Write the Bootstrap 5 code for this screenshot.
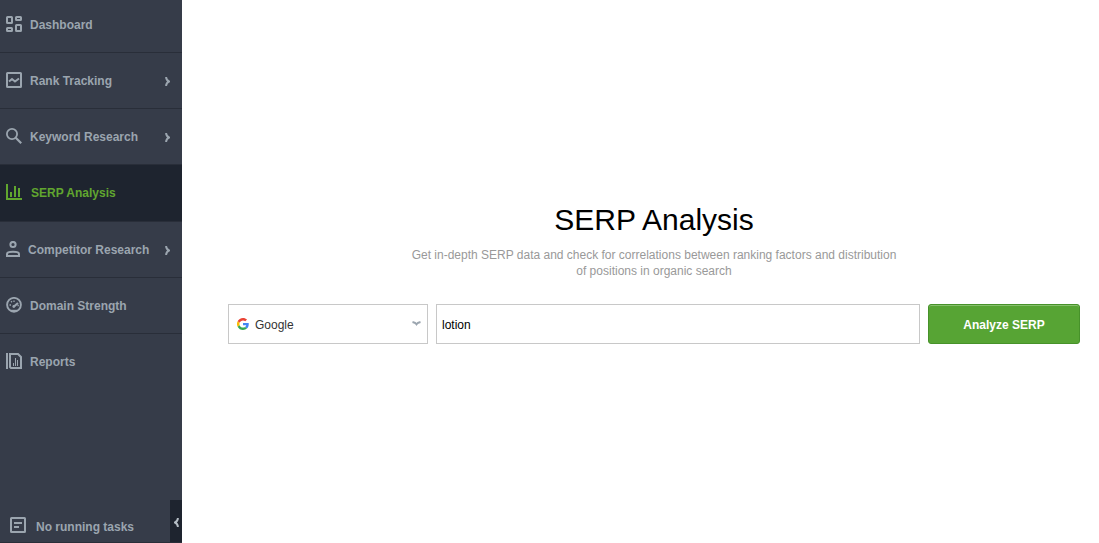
<!DOCTYPE html>
<html lang="en">
<head>
<meta charset="utf-8">
<meta name="viewport" content="width=device-width, initial-scale=1">
<title>SERP Analysis</title>
<link href="https://cdn.jsdelivr.net/npm/bootstrap@5.3.0/dist/css/bootstrap.min.css" rel="stylesheet">
<style>
  body { font-family: "Liberation Sans", Arial, sans-serif; font-size: 12px; line-height: 16px; color: #000; background: #fff; }
  .sidebar { width: 182px; background: #363c49; color: #9ba5af; font-weight: 700; }
  .side-link { height: 56px; padding: 0 12px 0 6px; gap: 8px; border-bottom: 1px solid #292e39; color: #9ba5af; text-decoration: none; }
  .side-link.first-link { height: 53px; padding-bottom: 3px; }
  .side-link.current { height: 57px; padding-bottom: 1px; background: #1e242f; color: #61a62f; gap: 9px; }
  .side-link.people { gap: 6px; }
  .side-link.last-link { border-bottom-color: transparent; }
  .chevron { width: 5px; height: 9px; margin-top: 2px; fill: none; stroke: currentColor; stroke-width: 2; }
  .glyph { width: 16px; height: 16px; margin-bottom: 1px; fill: none; stroke: currentColor; stroke-width: 2; }
  .tasks { height: 43px; border-bottom: 1px solid #292e39; }
  .tasks-label { padding: 11px 0 0 10px; gap: 10px; }
  .tasks-label .glyph { margin-bottom: 3px; }
  .collapse-tab { width: 12px; background: #1e242f; color: #b5bdc5; }
  .collapse-tab .chevron { transform: scaleX(-1); }
  .content-area { padding: 0 19px 0 46px; }
  .page-title { font-size: 30px; line-height: 40px; font-weight: 400; margin-bottom: 7px; }
  .intro { max-width: 490px; margin-bottom: 25px; color: #999; }
  .search-row { gap: 8px; }
  .engine { width: 200px; }
  .engine .form-select { padding: 2px 24px 0 26px; background-image: none; color: #333; }
  .engine-logo { left: 9px; width: 12px; height: 12px; }
  .engine-arrow { right: 7px; width: 9px; height: 5px; }
  .field { height: 40px; border: 1px solid #c8c8c8; border-radius: 0; font-size: 12px; line-height: 16px; }
  .query { padding: 2px 5px 0; color: #000; }
  .query:focus { color: #000; }
  .btn-analyze { width: 152px; height: 40px; padding: 2px 0 0; border: 1px solid #47922a; border-radius: 3px; background: #57a434; color: #fff; font-size: 12px; font-weight: 700; box-shadow: inset 0 1px #86bf6c; }
  .btn-analyze:hover { background: #4e982d; color: #fff; border-color: #47922a; }
</style>
</head>
<body>
<div class="d-flex min-vh-100">
  <aside class="sidebar d-flex flex-column flex-shrink-0">
    <nav class="d-flex flex-column" aria-label="Main">
      <a href="#" class="side-link first-link d-flex align-items-center">
        <svg class="glyph" viewBox="0 0 16 16" aria-hidden="true"><rect x="1" y="1" width="5" height="6" rx=".5"/><rect x="10" y="1" width="5" height="3" rx=".5"/><rect x="1" y="12" width="5" height="3" rx=".5"/><rect x="10" y="9" width="5" height="6" rx=".5"/></svg>
        <span>Dashboard</span>
      </a>
      <a href="#" class="side-link d-flex align-items-center">
        <svg class="glyph" viewBox="0 0 16 16" aria-hidden="true"><rect x="1" y="1" width="14" height="14" rx=".5"/><path d="M3 9.500 6 7l3 2.500 4-3"/></svg>
        <span>Rank Tracking</span>
        <svg class="chevron ms-auto" viewBox="0 0 5 9" aria-hidden="true"><path d="M1 0Q1.500 3.500 4 4.500 1.500 5.500 1 9"/></svg>
      </a>
      <a href="#" class="side-link d-flex align-items-center">
        <svg class="glyph" viewBox="0 0 16 16" aria-hidden="true"><circle cx="6" cy="6" r="5.100" stroke-width="1.800"/><path d="m9.700 9.700 5.500 5.500" stroke-width="2.200"/></svg>
        <span>Keyword Research</span>
        <svg class="chevron ms-auto" viewBox="0 0 5 9" aria-hidden="true"><path d="M1 0Q1.500 3.500 4 4.500 1.500 5.500 1 9"/></svg>
      </a>
      <a href="#" class="side-link current d-flex align-items-center" aria-current="page">
        <svg class="glyph" viewBox="0 0 16 16" aria-hidden="true"><path d="M1 0v15h15M5 8v5M9 2v11M13 4v9"/></svg>
        <span>SERP Analysis</span>
      </a>
      <a href="#" class="side-link people d-flex align-items-center">
        <svg class="glyph" viewBox="0 0 16 16" aria-hidden="true"><circle cx="7" cy="3.500" r="2.600"/><path d="M1 15v-2c0-3 12-3 12 0v2z"/></svg>
        <span>Competitor Research</span>
        <svg class="chevron ms-auto" viewBox="0 0 5 9" aria-hidden="true"><path d="M1 0Q1.500 3.500 4 4.500 1.500 5.500 1 9"/></svg>
      </a>
      <a href="#" class="side-link d-flex align-items-center">
        <svg class="glyph" viewBox="0 0 16 16" aria-hidden="true"><circle cx="8" cy="7.800" r="6.900" stroke-width="1.900"/><path d="m8 9.500 4-3.500" stroke-width="2.200"/><path d="M3.500 8H5M5 4.300l1 1M8 3.500V5M11.500 8.500h1.300" stroke-width="1.300"/><circle cx="7.800" cy="9.500" r="1.400" fill="currentColor" stroke="none"/><path d="M5 13.800h6"/></svg>
        <span>Domain Strength</span>
      </a>
      <a href="#" class="side-link last-link d-flex align-items-center">
        <svg class="glyph" viewBox="0 0 16 16" aria-hidden="true"><path d="M1 0v16"/><path d="M4 1h8l3 3v11H5l-1-1z"/><path d="M7.500 10v3M9.500 5v8M11.500 7v6" stroke-width="1"/></svg>
        <span>Reports</span>
      </a>
    </nav>
    <div class="tasks mt-auto d-flex justify-content-between">
      <div class="tasks-label d-flex align-items-center">
        <svg class="glyph" viewBox="0 0 16 16" aria-hidden="true"><rect x="1" y="1" width="14" height="14" rx=".5"/><path d="M4 6h8M4 10h5"/></svg>
        <span>No running tasks</span>
      </div>
      <button type="button" class="collapse-tab border-0 p-0 d-flex align-items-center justify-content-center" aria-label="Collapse sidebar">
        <svg class="chevron" viewBox="0 0 5 9" aria-hidden="true"><path d="M1 0Q1.500 3.500 4 4.500 1.500 5.500 1 9"/></svg>
      </button>
    </div>
  </aside>

  <main class="content-area flex-grow-1 d-flex flex-column justify-content-center">
    <h1 class="page-title text-center">SERP Analysis</h1>
    <p class="intro text-center mx-auto">Get in-depth SERP data and check for correlations between ranking factors and distribution of positions in organic search</p>
    <form class="search-row d-flex">
      <div class="engine position-relative d-flex align-items-center flex-shrink-0">
        <select class="form-select field" aria-label="Search engine"><option selected>Google</option></select>
        <svg class="engine-logo position-absolute pe-none" viewBox="0 0 48 48" aria-hidden="true">
          <path fill="#EA4335" d="M24 9.500c3.540 0 6.710 1.220 9.210 3.600l6.850-6.850C35.900 2.380 30.470 0 24 0 14.620 0 6.510 5.380 2.560 13.220l7.980 6.190C12.430 13.720 17.740 9.500 24 9.500z"/>
          <path fill="#4285F4" d="M46.980 24.550c0-1.570-.15-3.090-.38-4.550H24v9.020h12.940c-.58 2.960-2.260 5.480-4.780 7.180l7.730 6c4.510-4.180 7.090-10.360 7.090-17.650z"/>
          <path fill="#FBBC05" d="M10.530 28.590A14.500 14.500 0 0 1 10.530 19.410l-7.980-6.190a24 24 0 0 0 0 21.560z"/>
          <path fill="#34A853" d="M24 48c6.480 0 11.930-2.130 15.890-5.810l-7.730-6c-2.150 1.450-4.920 2.300-8.160 2.300-6.260 0-11.570-4.220-13.470-9.910l-7.980 6.190C6.510 42.620 14.620 48 24 48z"/>
        </svg>
        <svg class="engine-arrow position-absolute pe-none" viewBox="0 0 9 5" fill="none" stroke="#9ba5af" stroke-width="2" aria-hidden="true"><path d="M.5 1Q3.500 1.700 4.500 3.200 5.500 1.700 8.500 1"/></svg>
      </div>
      <input type="text" class="form-control field query" value="lotion" aria-label="Keyword">
      <button type="submit" class="btn btn-analyze flex-shrink-0">Analyze SERP</button>
    </form>
  </main>
</div>
<script src="https://cdn.jsdelivr.net/npm/bootstrap@5.3.0/dist/js/bootstrap.bundle.min.js"></script>
</body>
</html>
